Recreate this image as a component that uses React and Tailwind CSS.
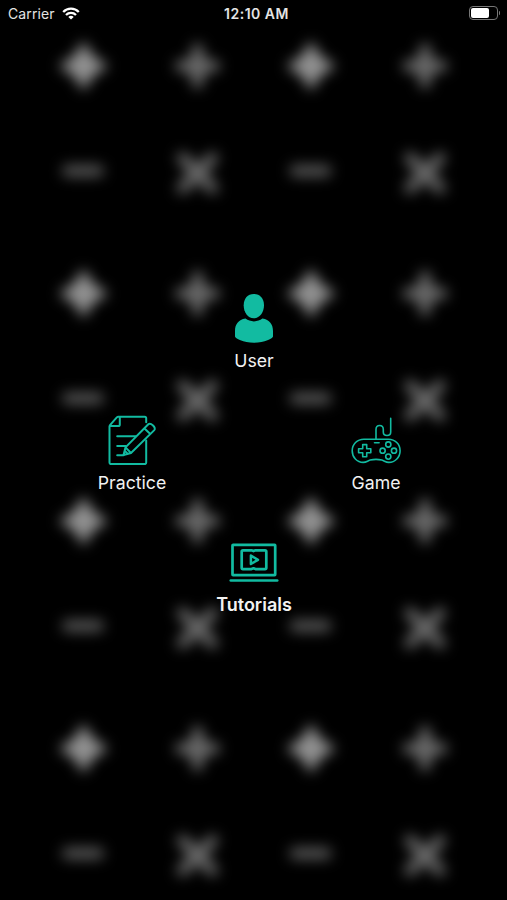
import { clsx } from 'clsx';

function UserIcon() {
    return (
        <svg viewBox="0 0 50 50" className="h-[50px] w-[50px]" fill="currentColor">
            <path d="M24.8 1C31 1 35 5.6 35 12.2c0 6.8-4 13-10.2 13S14.7 19 14.7 12.2C14.7 5.6 18.7 1 24.8 1Z" />
            <path d="M16.5 25.6c2.4 1.8 5.2 2.8 8.5 2.8s6-1 8.4-2.8C40.6 26.6 44 31.5 44 38v5.5c0 2-8.4 6.2-19 6.2S6 45.5 6 43.5V38c0-6.5 3.4-11.4 10.5-12.4Z" />
        </svg>
    );
}

function PracticeIcon() {
    return (
        <svg viewBox="0 0 50 50" className="h-[50px] w-[50px]" fill="none" stroke="currentColor" strokeWidth="2" strokeLinecap="round" strokeLinejoin="round">
            <path d="M39.2 7.2V3.2c0-1-.5-1.5-1.5-1.5H11.2c-.6 0-1 .3-1.4.7L3.2 9.8c-.5.6-.7 1.1-.7 1.8v36c0 1 .5 1.5 1.5 1.5h33.7c1 0 1.5-.5 1.5-1.5V25.5" />
            <path d="M12.8 2.5V9.5c0 1-.6 1.6-1.6 1.6H3.5" />
            <path d="M10.2 21.3H29M10.2 31h8.6M10.2 40.3h6.3" />
            <path d="m16.5 40 2-7.6L41.3 9.3c2.3-2.2 8.3 3.4 6 5.8L24 38l-7.5 2ZM37.5 13.4l5.8 5.5M18.5 32.4 24 38" />
            <path d="m18.2 36.2 2.3 2.4" />
        </svg>
    );
}

function GameIcon() {
    return (
        <svg viewBox="0 0 50 50" className="h-[50px] w-[50px]" fill="none" stroke="currentColor" strokeWidth="1.6" strokeLinecap="round" strokeLinejoin="round">
            <path d="M25 24v-9.5c0-5.3 7.3-5.3 7.3 0v2.4c0 4.7 7.4 4.7 7.4 0V3.4" />
            <path d="M12.8 24.2h24.6c6.7 0 11.7 5 11.7 11.5s-5 11.7-11.3 11.7c-3.2 0-4.3-1.6-7-2.3-3.5-.9-8.1-.9-11.6 0-2.7.7-3.8 2.3-7 2.3C6 47.4 1.2 42.2 1.2 35.7s5-11.5 11.6-11.5Z" />
            <path d="M23.5 27.7h4.6" />
            <path d="M11.7 29.6h4v4.1h4.1v4h-4.1v4.1h-4v-4.1H7.6v-4h4.1Z" />
            <circle cx="37.3" cy="29.5" r="2.6" />
            <circle cx="31.6" cy="35.7" r="2.6" />
            <circle cx="43" cy="35.7" r="2.6" />
            <circle cx="37.3" cy="41.6" r="2.6" />
        </svg>
    );
}

function TutorialsIcon() {
    return (
        <svg viewBox="0 0 50 50" className="h-[50px] w-[50px]" fill="none" stroke="currentColor" strokeWidth="2.7" strokeLinecap="round" strokeLinejoin="round">
            <rect x="3.5" y="7.8" width="42.7" height="30.4" rx=".6" />
            <path d="M1.8 43.5h46.4" />
            <path d="M14 13.3h8.5l2 .8 2-.8H36c.8 0 1.3.5 1.3 1.3v16.2c0 .8-.5 1.3-1.3 1.3h-9.5l-2-.8-2 .8H14c-.8 0-1.3-.5-1.3-1.3V14.6c0-.8.5-1.3 1.3-1.3Z" />
            <path strokeWidth="2.5" d="m21.9 18.6 7.1 4.2-7.1 4.2Z" />
        </svg>
    );
}

const MENU = [
    { label: 'User', Icon: UserIcon, place: 'col-start-2 row-start-1' },
    { label: 'Practice', Icon: PracticeIcon, place: 'col-start-1 row-start-2' },
    { label: 'Game', Icon: GameIcon, place: 'col-start-3 row-start-2' },
    { label: 'Tutorials', Icon: TutorialsIcon, place: 'col-start-2 row-start-3', active: true },
];

/* Blurred arithmetic signs, repeated every 227.5px both ways. */
function Backdrop() {
    return (
        <svg className="absolute inset-0 h-full w-full blur-[7px]" aria-hidden="true">
            <defs>
                <pattern id="signs" x="26.5" y="9" width="227.5" height="227.5" patternUnits="userSpaceOnUse">
                    <g stroke="#6c6c6c" strokeWidth="11" strokeLinecap="round">
                        <path stroke="none" fill="#929292" d="m57 32 9.5 15.5L82 57l-15.500 9.500L57 82l-9.500-15.500L32 57l15.500-9.500Z" />
                        <path d="M171 40v34M154 57h34" />
                        <path stroke="none" fill="#6c6c6c" d="m171 42 15 15-15 15-15-15Z" />
                        <path d="M41 161.8h31" stroke="#5c5c5c" />
                        <path d="m156 149 30 30M186 149l-30 30" />
                        <path stroke="none" fill="#6c6c6c" d="M163 156h16v16h-16Z" />
                    </g>
                </pattern>
            </defs>
            <rect width="100%" height="100%" fill="url(#signs)" />
        </svg>
    );
}

function StatusBar() {
    return (
        <header className="grid h-7 grid-cols-[1fr_auto_1fr] items-center pb-0.5 pl-2 pr-[7px] text-[#e4e4e4]">
            <div className="flex items-center gap-[7px] text-[14px] tracking-[0.1px]">
                <span>Carrier</span>
                <svg viewBox="0 0 18 13" className="h-[13px] w-[18px]" fill="none" stroke="#fff" strokeWidth="2.3">
                    <path d="M1.2 5c4.3-4.4 11.3-4.4 15.6 0M4 8c2.8-2.8 7.2-2.8 10 0" />
                    <path d="M6.3 9.9c1.5-1.5 3.9-1.5 5.4 0L9 12.6Z" fill="#fff" stroke="none" />
                </svg>
            </div>
            <span className="pl-[5px] text-[14px] font-semibold tracking-[0.5px]">12:10 AM</span>
            <div className="flex items-center justify-end gap-px">
                <div className="h-[14px] w-[29px] rounded-[4px] border border-[#777] p-px">
                    <div className="h-full w-[18px] rounded-[2px] bg-white" />
                </div>
                <div className="h-1 w-[1.5px] rounded-r bg-[#777]" />
            </div>
        </header>
    );
}

export default function App() {
    return (
        <div className="relative h-[900px] w-[507px] overflow-hidden bg-black font-['Inter','Liberation_Sans',sans-serif]">
            <Backdrop />
            <div className="relative flex h-full flex-col">
                <StatusBar />
                <nav className="mt-[265px] ml-[71px] grid grid-cols-[repeat(3,122px)] grid-rows-[repeat(3,122px)]">
                    {MENU.map(({ label, Icon, place, active }) => (
                        <button key={label} className={clsx('flex flex-col items-center justify-start text-[#12bba1]', place)}>
                            <Icon />
                            <span className={clsx('mt-[5.5px] leading-6 text-[#f2f2f2]', active ? 'text-[18px] font-semibold' : 'text-[17.7px]')}>
                                {label}
                            </span>
                        </button>
                    ))}
                </nav>
            </div>
        </div>
    );
}
